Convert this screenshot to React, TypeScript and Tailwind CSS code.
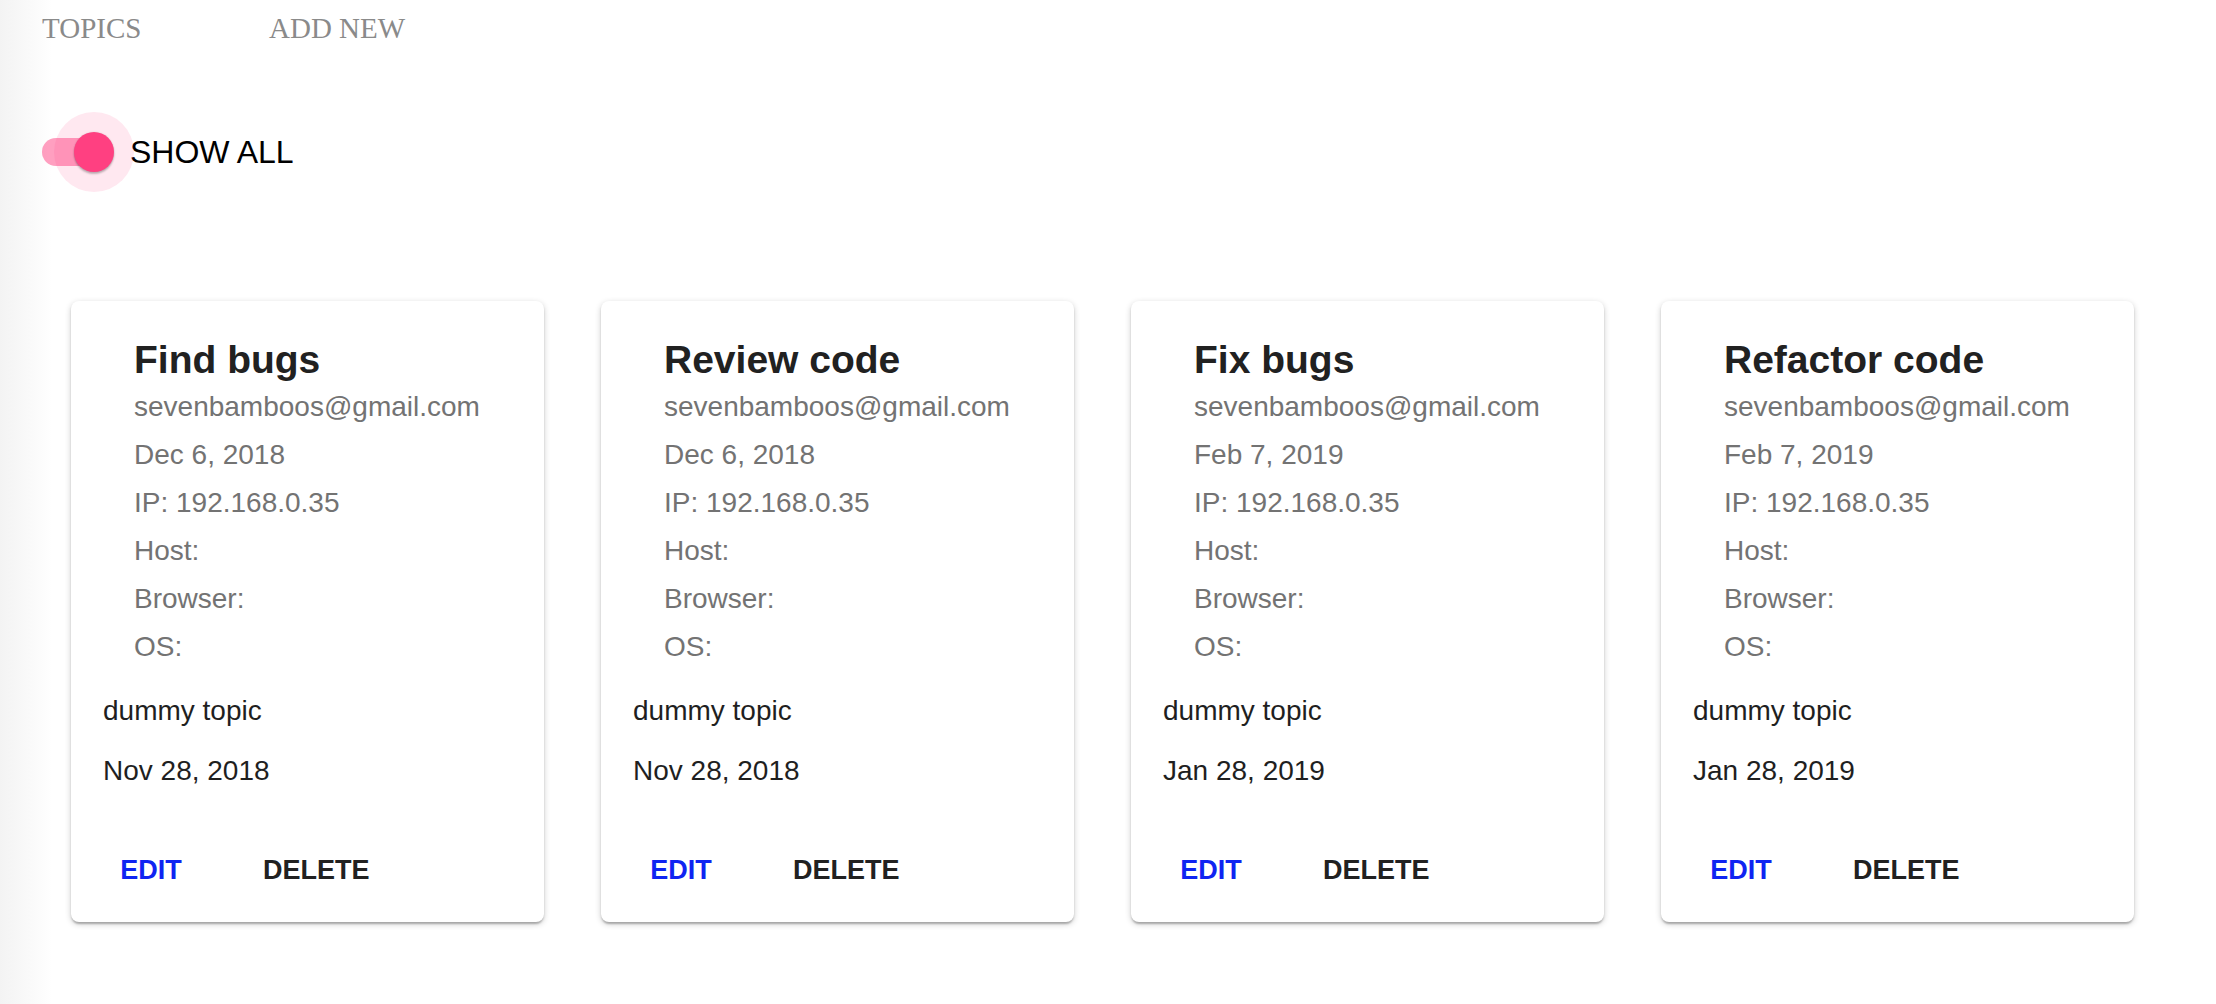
const TOPICS = [
  { title: "Find bugs", created: "Dec 6, 2018", due: "Nov 28, 2018" },
  { title: "Review code", created: "Dec 6, 2018", due: "Nov 28, 2018" },
  { title: "Fix bugs", created: "Feb 7, 2019", due: "Jan 28, 2019" },
  { title: "Refactor code", created: "Feb 7, 2019", due: "Jan 28, 2019" },
];

const SANS = "font-['Liberation_Sans',Arial,sans-serif]";

function Toggle() {
  return (
    <div className="relative h-[80px] w-[88px] shrink-0">
      <div className="absolute left-0 top-[26px] h-[28px] w-[68px] rounded-full bg-[#ff4081]/50" />
      <div className="absolute left-[12px] top-0 h-[80px] w-[80px] rounded-full bg-[#ff4081]/[0.12]" />
      <div className="absolute left-[32px] top-[20px] h-[40px] w-[40px] rounded-full bg-[#ff4081] shadow-[0_2px_2px_rgba(0,0,0,0.24),0_0_2px_rgba(0,0,0,0.12)]" />
    </div>
  );
}

function TopicCard({ topic }: { topic: (typeof TOPICS)[number] }) {
  return (
    <div className="flex w-[473px] shrink-0 flex-col rounded-[8px] bg-white pt-[36px] shadow-[0_2px_6px_rgba(0,0,0,0.2),0_2px_2px_rgba(0,0,0,0.14),0_4px_2px_-2px_rgba(0,0,0,0.12)]">
      <div className="pl-[63px]">
        <h2 className="text-[39px] font-bold leading-[46px] text-[#212121]">
          {topic.title}
        </h2>
        <div className="text-[28px] leading-[48px] text-[#737373]">
          <div>sevenbamboos@gmail.com</div>
          <div>{topic.created}</div>
          <div>IP: 192.168.0.35</div>
          <div>Host:</div>
          <div>Browser:</div>
          <div>OS:</div>
        </div>
      </div>
      <div className="mt-[10px] pl-[32px] text-[28px] leading-[60px] text-[#1f1f1f]">
        <div>dummy topic</div>
        <div>{topic.due}</div>
      </div>
      <div className="mt-[17px] flex items-center gap-[16px] px-[16px] py-[16px]">
        <button className="flex h-[72px] min-w-[128px] items-center justify-center px-[32px] text-[27px] font-bold text-[#0f24f2]">
          EDIT
        </button>
        <button className="flex h-[72px] min-w-[128px] items-center justify-center px-[32px] text-[27px] font-bold text-[#212121]">
          DELETE
        </button>
      </div>
    </div>
  );
}

export default function App() {
  return (
    <div
      className={`min-h-[1004px] w-full bg-[linear-gradient(to_right,#f3f3f3,#fcfcfc_40px,#ffffff_52px)] ${SANS}`}
    >
      <nav className="flex pl-[42px] pt-[8px] font-['Liberation_Serif',Georgia,serif] text-[29px] leading-[40px] text-[#8a8a8a]">
        <a href="#topics" className="w-[227px]">
          TOPICS
        </a>
        <a href="#new">ADD NEW</a>
      </nav>

      <div className="mt-[64px] flex items-center pl-[42px]">
        <Toggle />
        <span className="text-[32px] leading-[40px] text-black">SHOW ALL</span>
      </div>

      <div className="mt-[109px] flex gap-[57px] pl-[71px]">
        {TOPICS.map((t) => (
          <TopicCard key={t.title} topic={t} />
        ))}
      </div>
    </div>
  );
}
